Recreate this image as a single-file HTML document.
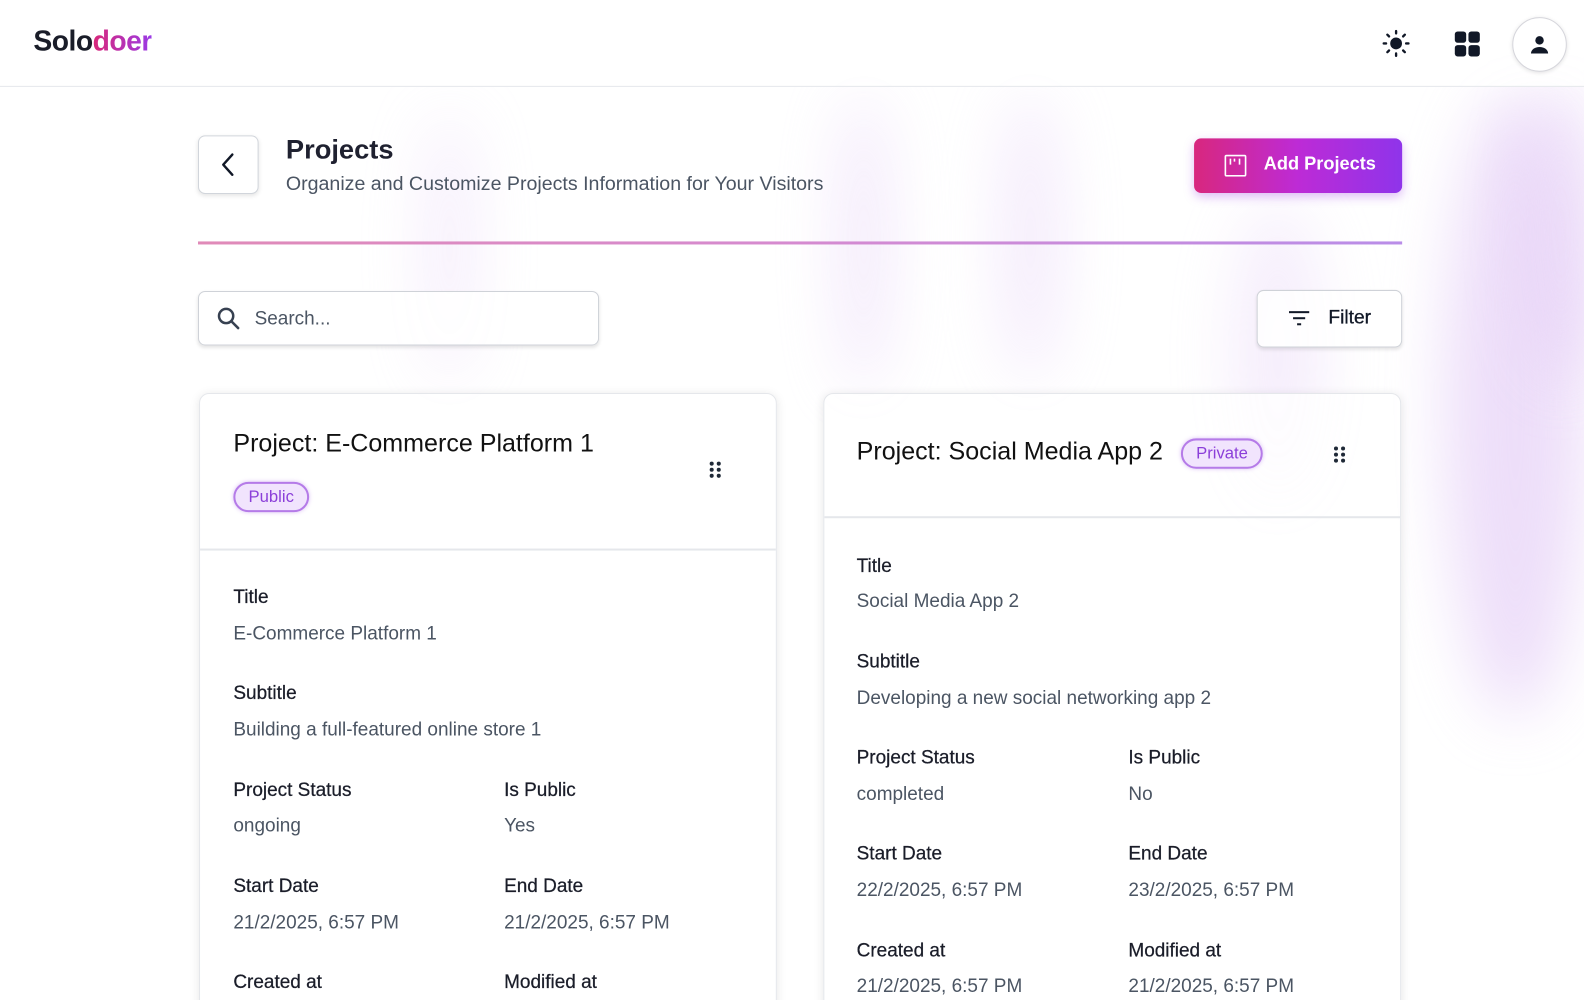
<!DOCTYPE html>
<html><head><meta charset="utf-8">
<style>
*{box-sizing:border-box;margin:0;padding:0}
html,body{width:1584px;height:1000px;overflow:hidden;background:#fff}
body{font-family:"Liberation Sans",Arial,sans-serif;color:#1f2937;position:relative}
#w{position:absolute;left:0;top:0;width:1568px;height:990px;overflow:hidden;transform:scale(1.0102);transform-origin:0 0}
.blob{position:absolute;border-radius:50%;filter:blur(30px);background:#e4cdf6;opacity:.6}
.abs{position:absolute}
.card{position:absolute;background:rgba(255,255,255,.82);border:1px solid #e5e7eb;border-radius:10px;box-shadow:0 2px 10px rgba(0,0,0,.1);overflow:hidden}
.lbl{position:absolute;font-size:18.8px;color:#1a1d29;line-height:22px;white-space:nowrap;-webkit-text-stroke:0.25px #1a1d29}
.val{position:absolute;font-size:18.8px;color:#4b5563;line-height:22px;white-space:nowrap}
.badge{position:absolute;height:30px;border:2px solid #b57be8;background:#f1e4fd;color:#8b3fd9;border-radius:16px;font-size:16.5px;line-height:26px;padding:0 13px;box-shadow:0 0 4px rgba(160,90,230,.4)}
</style></head><body><div id="w">
<div class="blob" style="left:1430px;top:90px;width:140px;height:620px;opacity:.65"></div>
<div class="blob" style="left:1510px;top:80px;width:70px;height:300px;opacity:.6"></div>
<div class="blob" style="left:830px;top:90px;width:50px;height:300px;opacity:.45"></div>
<div class="blob" style="left:990px;top:90px;width:60px;height:290px;opacity:.4"></div>
<div class="blob" style="left:420px;top:110px;width:50px;height:270px;opacity:.35"></div>
<div class="blob" style="left:1220px;top:200px;width:90px;height:300px;opacity:.35"></div>

<!-- header -->
<div class="abs" style="left:0;top:0;width:1568px;height:86px;background:rgba(255,255,255,.9);border-bottom:1px solid #e5e7eb"></div>
<div class="abs" style="left:33px;top:25px;font-size:28px;font-weight:bold;letter-spacing:-0.5px;color:#1a1d29">Solo<span style="background:linear-gradient(90deg,#d9287a,#9b3ae6);-webkit-background-clip:text;color:transparent">doer</span></div>
<svg class="abs" style="left:1368px;top:29px" width="28" height="28" viewBox="0 0 24 24" fill="#111827"><circle cx="12" cy="12" r="5"/><g stroke="#111827" stroke-width="2" stroke-linecap="round"><path d="M12 1.5v2M12 20.5v2M1.5 12h2M20.5 12h2M4.6 4.6l1.4 1.4M18 18l1.4 1.4M4.6 19.4L6 18M18 6l1.4-1.4"/></g></svg>
<svg class="abs" style="left:1439px;top:30px" width="27" height="27" viewBox="0 0 24 24" fill="#111827"><rect x="1" y="1" width="10" height="10" rx="2.5"/><rect x="13" y="1" width="10" height="10" rx="2.5"/><rect x="1" y="13" width="10" height="10" rx="2.5"/><rect x="13" y="13" width="10" height="10" rx="2.5"/></svg>
<div class="abs" style="left:1497px;top:17px;width:54px;height:54px;border-radius:50%;border:1px solid #d6d6dc;background:#fff;box-shadow:0 1px 4px rgba(0,0,0,.12)"></div>
<svg class="abs" style="left:1512px;top:32px" width="24" height="24" viewBox="0 0 24 24" fill="#111827"><circle cx="12" cy="8" r="4.2"/><path d="M3.5 21c0-4 4-6.5 8.5-6.5s8.5 2.5 8.5 6.5z"/></svg>

<!-- page header -->
<div class="abs" style="left:196px;top:134px;width:60px;height:58px;border:1px solid #d1d5db;border-radius:7px;background:#fff;box-shadow:0 2px 4px rgba(0,0,0,.1)"></div>
<svg class="abs" style="left:214px;top:150px" width="24" height="26" viewBox="0 0 24 26"><path d="M16 3L7 13l9 10" stroke="#111827" stroke-width="2.4" fill="none" stroke-linecap="round" stroke-linejoin="round"/></svg>
<div class="abs" style="left:283px;top:133px;font-size:27px;font-weight:bold;color:#1f2130">Projects</div>
<div class="abs" style="left:283px;top:171px;font-size:19.4px;color:#4b5563">Organize and Customize Projects Information for Your Visitors</div>
<div class="abs" style="left:1182px;top:137px;width:206px;height:54px;border-radius:7px;background:linear-gradient(90deg,#d8277e,#bd2bd6 50%,#8f34ea);box-shadow:0 4px 10px rgba(160,70,230,.35)"></div>
<svg class="abs" style="left:1212px;top:153px" width="22" height="22" viewBox="0 0 22 22" fill="none" stroke="#fff" stroke-width="1.6"><rect x="1" y="1" width="20" height="20" rx="1"/><path d="M6 4v6M10 4v3M15 4v6"/></svg>
<div class="abs" style="left:1251px;top:152px;font-size:18px;font-weight:bold;color:#fff">Add Projects</div>
<div class="abs" style="left:196px;top:239px;width:1192px;height:3px;background:linear-gradient(90deg,#e08ab8,#d58ad0 50%,#b98de8)"></div>

<!-- search / filter -->
<div class="abs" style="left:196px;top:288px;width:397px;height:54px;border:1px solid #cfd2d8;border-radius:7px;background:rgba(255,255,255,.9);box-shadow:0 2px 3px rgba(0,0,0,.1)"></div>
<svg class="abs" style="left:213px;top:302px" width="26" height="26" viewBox="0 0 24 24" fill="none" stroke="#374151" stroke-width="2.3" stroke-linecap="round"><circle cx="10" cy="10" r="6.5"/><path d="M15 15l6 6"/></svg>
<div class="abs" style="left:252px;top:304px;font-size:18.8px;color:#4b5563">Search...</div>
<div class="abs" style="left:1244px;top:287px;width:144px;height:57px;border:1px solid #cfd2d8;border-radius:7px;background:rgba(255,255,255,.9);box-shadow:0 2px 3px rgba(0,0,0,.1)"></div>
<svg class="abs" style="left:1275px;top:306px" width="22" height="18" viewBox="0 0 22 18" fill="#111827"><rect x="1" y="2" width="20" height="2"/><rect x="5" y="8" width="12" height="2"/><rect x="9" y="14" width="4" height="2"/></svg>
<div class="abs" style="left:1315px;top:304px;font-size:19px;color:#111827;-webkit-text-stroke:0.3px #111827">Filter</div>

<!-- card 1 -->
<div class="card" style="left:197px;top:389px;width:572px;height:640px">
  <div class="abs" style="left:0;top:153px;width:572px;height:2px;background:#e5e7eb"></div>
</div>
<div class="abs" style="left:231px;top:426px;font-size:24.8px;color:#111">Project: E-Commerce Platform 1</div>
<div class="badge" style="left:231px;top:477px">Public</div>
<svg class="abs" style="left:701px;top:456px" width="14" height="18" viewBox="0 0 14 18" fill="#1f2937"><circle cx="3.5" cy="3" r="2"/><circle cx="10.5" cy="3" r="2"/><circle cx="3.5" cy="9" r="2"/><circle cx="10.5" cy="9" r="2"/><circle cx="3.5" cy="15" r="2"/><circle cx="10.5" cy="15" r="2"/></svg>
<div class="lbl" style="left:231px;top:580px">Title</div>
<div class="val" style="left:231px;top:616px">E-Commerce Platform 1</div>
<div class="lbl" style="left:231px;top:675px">Subtitle</div>
<div class="val" style="left:231px;top:711px">Building a full-featured online store 1</div>
<div class="lbl" style="left:231px;top:771px">Project Status</div>
<div class="lbl" style="left:499px;top:771px">Is Public</div>
<div class="val" style="left:231px;top:806px">ongoing</div>
<div class="val" style="left:499px;top:806px">Yes</div>
<div class="lbl" style="left:231px;top:866px">Start Date</div>
<div class="lbl" style="left:499px;top:866px">End Date</div>
<div class="val" style="left:231px;top:902px">21/2/2025, 6:57 PM</div>
<div class="val" style="left:499px;top:902px">21/2/2025, 6:57 PM</div>
<div class="lbl" style="left:231px;top:961px">Created at</div>
<div class="lbl" style="left:499px;top:961px">Modified at</div>

<!-- card 2 -->
<div class="card" style="left:815px;top:389px;width:572px;height:640px">
  <div class="abs" style="left:0;top:121px;width:572px;height:2px;background:#e5e7eb"></div>
</div>
<div class="abs" style="left:848px;top:434px;font-size:24.8px;color:#111">Project: Social Media App 2</div>
<div class="badge" style="left:1169px;top:434px">Private</div>
<svg class="abs" style="left:1319px;top:441px" width="14" height="18" viewBox="0 0 14 18" fill="#1f2937"><circle cx="3.5" cy="3" r="2"/><circle cx="10.5" cy="3" r="2"/><circle cx="3.5" cy="9" r="2"/><circle cx="10.5" cy="9" r="2"/><circle cx="3.5" cy="15" r="2"/><circle cx="10.5" cy="15" r="2"/></svg>
<div class="lbl" style="left:848px;top:549px">Title</div>
<div class="val" style="left:848px;top:584px">Social Media App 2</div>
<div class="lbl" style="left:848px;top:644px">Subtitle</div>
<div class="val" style="left:848px;top:680px">Developing a new social networking app 2</div>
<div class="lbl" style="left:848px;top:739px">Project Status</div>
<div class="lbl" style="left:1117px;top:739px">Is Public</div>
<div class="val" style="left:848px;top:775px">completed</div>
<div class="val" style="left:1117px;top:775px">No</div>
<div class="lbl" style="left:848px;top:834px">Start Date</div>
<div class="lbl" style="left:1117px;top:834px">End Date</div>
<div class="val" style="left:848px;top:870px">22/2/2025, 6:57 PM</div>
<div class="val" style="left:1117px;top:870px">23/2/2025, 6:57 PM</div>
<div class="lbl" style="left:848px;top:930px">Created at</div>
<div class="lbl" style="left:1117px;top:930px">Modified at</div>
<div class="val" style="left:848px;top:965px">21/2/2025, 6:57 PM</div>
<div class="val" style="left:1117px;top:965px">21/2/2025, 6:57 PM</div>
</div></body></html>
